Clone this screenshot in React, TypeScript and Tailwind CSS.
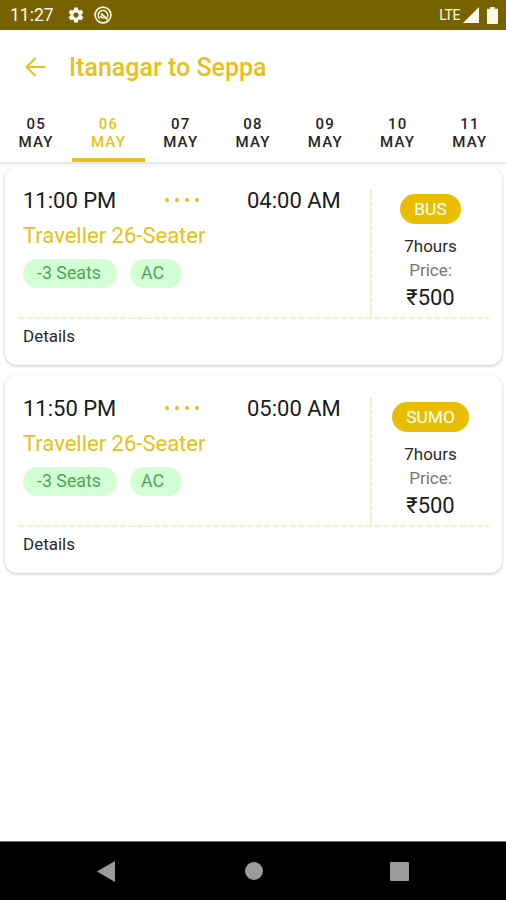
import clsx from "clsx";

const days = ["05", "06", "07", "08", "09", "10", "11"];
const activeDay = "06";

type Trip = {
  id: number;
  departure: string;
  arrival: string;
  vehicle: string;
  seats: string;
  type: string;
  duration: string;
  price: string;
};

const trips: Trip[] = [
  {
    id: 1,
    departure: "11:00 PM",
    arrival: "04:00 AM",
    vehicle: "Traveller 26-Seater",
    seats: "-3 Seats",
    type: "BUS",
    duration: "7hours",
    price: "₹500",
  },
  {
    id: 2,
    departure: "11:50 PM",
    arrival: "05:00 AM",
    vehicle: "Traveller 26-Seater",
    seats: "-3 Seats",
    type: "SUMO",
    duration: "7hours",
    price: "₹500",
  },
];

function StatusBar() {
  return (
    <div className="flex h-[30px] shrink-0 items-center bg-[#786200] pl-[10px] pr-[8px] text-[#fdf8ec]">
      <span className="w-[44px] whitespace-nowrap pt-[2px] text-[17.5px] leading-none">11:27</span>
      <svg className="ml-[13px] h-[18px] w-[18px]" viewBox="0 0 24 24" fill="currentColor">
        <path d="M19.43 12.98c.04-.32.07-.64.07-.98s-.03-.66-.07-.98l2.11-1.65c.19-.15.24-.42.12-.64l-2-3.46c-.12-.22-.39-.3-.61-.22l-2.49 1c-.52-.4-1.08-.73-1.69-.98l-.38-2.65A.488.488 0 0 0 14 2h-4c-.25 0-.46.18-.49.42l-.38 2.65c-.61.25-1.17.59-1.69.98l-2.49-1c-.23-.09-.49 0-.61.22l-2 3.46c-.13.22-.07.49.12.64l2.11 1.65c-.04.32-.07.65-.07.98s.03.66.07.98l-2.11 1.65c-.19.15-.24.42-.12.64l2 3.46c.12.22.39.3.61.22l2.49-1c.52.4 1.08.73 1.69.98l.38 2.65c.03.24.24.42.49.42h4c.25 0 .46-.18.49-.42l.38-2.65c.61-.25 1.17-.59 1.69-.98l2.49 1c.23.09.49 0 .61-.22l2-3.46c.12-.22.07-.49-.12-.64l-2.11-1.65zM12 15.5c-1.93 0-3.5-1.57-3.5-3.5s1.57-3.5 3.5-3.5 3.5 1.57 3.5 3.5-1.57 3.5-3.5 3.5z" />
      </svg>
      <svg
        className="ml-[9px] h-[18px] w-[18px]"
        viewBox="0 0 18 18"
        fill="none"
        stroke="currentColor"
        strokeWidth="1.6"
      >
        <circle cx="9" cy="9" r="7.9" />
        <path d="M5.8 12.6A4.7 4.7 0 1 1 13 11.6" />
        <path d="M7.2 7.6 13.4 13.6" strokeWidth="2" />
        <path d="M6.6 9.6a2.6 2.6 0 0 0 3.2 2.2" strokeWidth="1.4" />
      </svg>
      <span className="ml-auto text-[14px] leading-none tracking-[-0.4px]">LTE</span>
      <svg className="ml-[3px] h-[16px] w-[16px]" viewBox="0 0 16 16" fill="currentColor">
        <path d="M0 16 16 0v16z" />
      </svg>
      <svg className="ml-[8px] h-[17px] w-[11px]" viewBox="0 0 11 17" fill="currentColor">
        <path d="M3.2 0h4.6v1.8H10a1 1 0 0 1 1 1V16a1 1 0 0 1-1 1H1a1 1 0 0 1-1-1V2.8a1 1 0 0 1 1-1h2.2z" />
      </svg>
    </div>
  );
}

function Header() {
  return (
    <header className="relative z-10 flex h-[74px] shrink-0 items-center bg-white pl-[25px] text-[#e8bf1c]">
      <svg
        className="h-[20px] w-[20px]"
        viewBox="0 0 20 20"
        fill="none"
        stroke="currentColor"
        strokeWidth="2"
      >
        <path d="M20 10H2M10.5 1 1.5 10l9 9" />
      </svg>
      <h1 className="ml-[24px] whitespace-nowrap text-[25px] font-medium leading-none">
        Itanagar to Seppa
      </h1>
    </header>
  );
}

function DayTabs() {
  return (
    <nav className="flex h-[59px] shrink-0 border-b border-[#e8e8e8] shadow-[0_1px_2px_rgba(0,0,0,0.12)]">
      {days.map((day) => (
        <button
          key={day}
          className={clsx(
            "flex w-[72.3px] shrink-0 flex-col items-center justify-center border-b-4 pt-[3px] text-[15px] font-medium leading-[18px] tracking-[1.2px]",
            day === activeDay
              ? "border-[#e8bf1c] text-[#e8bf1c]"
              : "border-transparent text-[#262626]"
          )}
        >
          <span>{day}</span>
          <span>MAY</span>
        </button>
      ))}
    </nav>
  );
}

function TripCard({ trip }: { trip: Trip }) {
  return (
    <article className="h-[198px] rounded-[12px] bg-white px-[13px] pt-[23px] shadow-[0_1px_3px_rgba(0,0,0,0.24)]">
      <div className="flex h-[127px]">
        {/* Times, vehicle and tags */}
        <div className="w-[352px] pl-[5px]">
          <div className="flex h-[21px] items-center text-[22px] text-[#1c1c1c]">
            <span className="w-[142px] whitespace-nowrap">{trip.departure}</span>
            <div className="flex w-[82px] gap-[6px] pb-[2px]">
              {[0, 1, 2, 3].map((dot) => (
                <span key={dot} className="h-[4px] w-[4px] rounded-full bg-[#e8bf1c]" />
              ))}
            </div>
            <span className="whitespace-nowrap">{trip.arrival}</span>
          </div>
          <p className="mt-[12px] text-[22px] leading-[26px] text-[#e8bf1c]">{trip.vehicle}</p>
          <div className="mt-[10px] flex gap-[13px] text-[17.8px] text-[#4fa457]">
            <span className="flex h-[29px] w-[94px] items-center rounded-full bg-[#d2ffd4] pl-[14px]">
              {trip.seats}
            </span>
            <span className="flex h-[29px] w-[52px] items-center rounded-full bg-[#d2ffd4] pl-[11px]">
              AC
            </span>
          </div>
        </div>

        <div className="w-[2px] bg-[repeating-linear-gradient(180deg,#faeabb_0_4px,#fdf6df_4px_6px)]" />

        {/* Type and fare */}
        <div className="flex flex-1 flex-col items-center pt-[4px]">
          <span className="flex h-[30px] items-center rounded-full bg-[#e8bf00] px-[14.5px] text-[17.4px] text-white">
            {trip.type}
          </span>
          <span className="mt-[10px] text-[17px] leading-[24px] text-[#2a2a2a]">
            {trip.duration}
          </span>
          <span className="text-[17px] leading-[24px] text-[#777777]">Price:</span>
          <span className="text-[22px] leading-[31px] text-[#1c1c1c]">{trip.price}</span>
        </div>
      </div>
      <div className="h-[2px] bg-[repeating-linear-gradient(90deg,#f9efca_0_6px,#fffdf6_6px_8.5px)]" />
      <p className="mt-[6px] pl-[5px] text-[17px] leading-[22px] text-[#2a2a2a]">Details</p>
    </article>
  );
}

function NavigationBar() {
  return (
    <div className="flex h-[59px] shrink-0 items-center border-t border-[#777777] bg-black pl-[97px] text-[#9b9b9b]">
      <svg className="h-[21px] w-[18px]" viewBox="0 0 18 21" fill="currentColor">
        <path d="M0 10.5 18 0v21z" />
      </svg>
      <span className="ml-[130px] h-[18px] w-[18px] rounded-full bg-[#9b9b9b]" />
      <span className="ml-[127px] h-[19px] w-[19px] rounded-[1px] bg-[#9b9b9b]" />
    </div>
  );
}

export default function App() {
  return (
    <div className="flex h-[900px] w-[506px] flex-col overflow-hidden bg-white font-['Roboto',sans-serif]">
      <StatusBar />
      <Header />
      <DayTabs />
      <main className="flex flex-1 flex-col gap-[10px] pl-[5px] pr-[4px] pt-[4px]">
        {trips.map((trip) => (
          <TripCard key={trip.id} trip={trip} />
        ))}
      </main>
      <NavigationBar />
    </div>
  );
}
